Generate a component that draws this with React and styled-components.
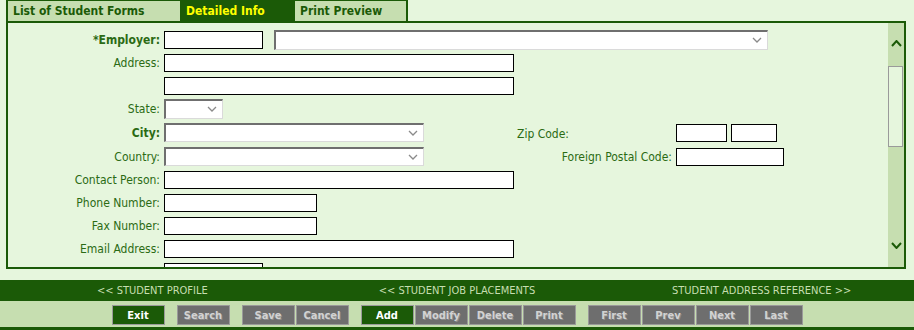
import React from 'react';
import styled, { createGlobalStyle } from 'styled-components';

const DARK = '#1b5a07';
const LIGHT = '#c6deb0';
const BG = '#e6f6dd';
const LABEL = '#2b6b14';
const FONT = '"DejaVu Sans Condensed", "DejaVu Sans", Verdana, sans-serif';

const Global = createGlobalStyle`
  html, body { margin: 0; padding: 0; background: ${BG}; }
  body { font-family: ${FONT}; font-stretch: condensed; overflow: hidden; }
  * { box-sizing: border-box; }
`;

const Page = styled.div`
  width: 914px;
  height: 330px;
  display: flex;
  flex-direction: column;
  background: ${BG};
`;

const TabBar = styled.div`
  display: flex;
  height: 21px;
  padding-left: 6px;
`;

const Tab = styled.div`
  width: ${p => p.$w}px;
  height: 21px;
  display: flex;
  align-items: center;
  padding-left: 5px;
  background: ${p => (p.$active ? DARK : LIGHT)};
  color: ${p => (p.$active ? '#ffff00' : DARK)};
  border-top: 1px solid ${DARK};
  border-left: ${p => (p.$first ? 2 : 1)}px solid ${DARK};
  border-right: ${p => (p.$last ? 2 : 0)}px solid ${DARK};
  font-weight: bold;
  font-size: 12px;
  white-space: nowrap;
`;

const Panel = styled.div`
  margin: 0 8px 0 6px;
  height: 248px;
  border: 2px solid ${DARK};
  display: flex;
  background: ${BG};
`;

const Content = styled.div`
  flex: 1;
  overflow: hidden;
  padding-top: 5px;
`;

const Row = styled.div`
  display: flex;
  align-items: center;
  height: ${p => p.$h || 23}px;
`;

const Label = styled.div`
  width: 152px;
  margin-right: 4px;
  text-align: right;
  color: ${LABEL};
  font-size: 12px;
  font-weight: ${p => (p.$bold ? 'bold' : 'normal')};
  white-space: nowrap;
`;

const TextBox = styled.div`
  width: ${p => p.$w}px;
  height: 18px;
  background: #fff;
  border: 1px solid #000;
  margin-left: ${p => p.$ml || 0}px;
`;

const SelectBox = styled.div`
  width: ${p => p.$w}px;
  height: ${p => p.$h || 19}px;
  margin-left: ${p => p.$ml || 0}px;
  background: #fff;
  border-style: solid;
  border-width: 2px 1px 1px 2px;
  border-color: #6f6f6f #dadada #dadada #6f6f6f;
  display: flex;
  align-items: center;
  justify-content: flex-end;
  padding-right: 5px;
`;

const Side = styled.div`
  display: flex;
  align-items: center;
  margin-left: 93px;
`;

const SideLabel = styled.div`
  width: 155px;
  margin-right: 4px;
  text-align: ${p => p.$align};
  color: ${LABEL};
  font-size: 12px;
  white-space: nowrap;
  padding-top: ${p => p.$pt || 0}px;
`;

const ScrollBar = styled.div`
  width: 16px;
  background: ${LIGHT};
  display: flex;
  flex-direction: column;
`;

const ArrowZone = styled.div`
  height: 43px;
  display: flex;
  justify-content: center;
  align-items: ${p => (p.$down ? 'flex-end' : 'flex-start')};
  padding: ${p => (p.$down ? '0 0 18px' : '17px 0 0')};
`;

const Thumb = styled.div`
  height: 81px;
  margin: 0 1px 0 0;
  background: ${BG};
  border: 1px solid #9a9a9a;
`;

const Track = styled.div`
  flex: 1;
`;

const Gap = styled.div`
  height: 11px;
`;

const NavBar = styled.div`
  height: 21px;
  background: ${DARK};
  display: grid;
  grid-template-columns: 1fr 1fr 1fr;
  align-items: center;
`;

const NavLink = styled.div`
  text-align: center;
  color: ${LIGHT};
  font-size: 11px;
  white-space: nowrap;
`;

const ButtonBar = styled.div`
  height: 29px;
  background: ${LIGHT};
  border-bottom: 3px solid ${DARK};
  display: flex;
  justify-content: center;
  align-items: flex-start;
  padding-top: 4px;
  gap: 12px;
`;

const Group = styled.div`
  display: flex;
  gap: 1px;
`;

const Button = styled.div`
  width: 53px;
  height: 20px;
  display: flex;
  align-items: center;
  justify-content: center;
  border: 1px solid #9a9a9a;
  background: ${p => (p.$enabled ? DARK : '#6e6e6e')};
  color: ${p => (p.$enabled ? '#ffffff' : '#d2d2d2')};
  text-shadow: ${p => (p.$enabled ? 'none' : '1px 1px 0 #8c8c8c')};
  font-weight: bold;
  font-size: 11px;
`;

const Chevron = ({ down, color = DARK, w = 11, h = 7, sw = 2 }) => (
  <svg width={w} height={h} viewBox={`0 0 ${w} ${h}`}>
    <polyline
      points={down ? `1,1 ${w / 2},${h - 1} ${w - 1},1` : `1,${h - 1} ${w / 2},1 ${w - 1},${h - 1}`}
      fill="none"
      stroke={color}
      strokeWidth={sw}
    />
  </svg>
);

const SelArrow = () => <Chevron down color="#8a8a8a" w={10} h={6} sw={1.3} />;

const groups = [
  [['Exit', true]],
  [['Search', false]],
  [['Save', false], ['Cancel', false]],
  [['Add', true], ['Modify', false], ['Delete', false], ['Print', false]],
  [['First', false], ['Prev', false], ['Next', false], ['Last', false]],
];

export default function App() {
  return (
    <Page>
      <Global />
      <TabBar>
        <Tab $w={174} $first>List of Student Forms</Tab>
        <Tab $w={114} $active>Detailed Info</Tab>
        <Tab $w={114} $last>Print Preview</Tab>
      </TabBar>
      <Panel>
        <Content>
          <Row>
            <Label $bold>*Employer:</Label>
            <TextBox $w={99} />
            <SelectBox $w={494} $h={20} $ml={11}><SelArrow /></SelectBox>
          </Row>
          <Row>
            <Label>Address:</Label>
            <TextBox $w={350} />
          </Row>
          <Row>
            <Label />
            <TextBox $w={350} />
          </Row>
          <Row>
            <Label>State:</Label>
            <SelectBox $w={59} $h={20}><SelArrow /></SelectBox>
          </Row>
          <Row $h={25}>
            <Label $bold>City:</Label>
            <SelectBox $w={260}><SelArrow /></SelectBox>
            <Side>
              <SideLabel $align="left" $pt={3}>Zip Code:</SideLabel>
              <TextBox $w={51} />
              <TextBox $w={46} $ml={4} />
            </Side>
          </Row>
          <Row>
            <Label>Country:</Label>
            <SelectBox $w={260}><SelArrow /></SelectBox>
            <Side>
              <SideLabel $align="right">Foreign Postal Code:</SideLabel>
              <TextBox $w={108} />
            </Side>
          </Row>
          <Row>
            <Label>Contact Person:</Label>
            <TextBox $w={350} />
          </Row>
          <Row>
            <Label>Phone Number:</Label>
            <TextBox $w={153} />
          </Row>
          <Row>
            <Label>Fax Number:</Label>
            <TextBox $w={153} />
          </Row>
          <Row>
            <Label>Email Address:</Label>
            <TextBox $w={350} />
          </Row>
          <Row>
            <Label />
            <TextBox $w={99} />
          </Row>
        </Content>
        <ScrollBar>
          <ArrowZone><Chevron /></ArrowZone>
          <Thumb />
          <Track />
          <ArrowZone $down><Chevron down /></ArrowZone>
        </ScrollBar>
      </Panel>
      <Gap />
      <NavBar>
        <NavLink>&lt;&lt; STUDENT PROFILE</NavLink>
        <NavLink>&lt;&lt; STUDENT JOB PLACEMENTS</NavLink>
        <NavLink>STUDENT ADDRESS REFERENCE &gt;&gt;</NavLink>
      </NavBar>
      <ButtonBar>
        {groups.map((g, i) => (
          <Group key={i}>
            {g.map(([t, en]) => (
              <Button key={t} $enabled={en}>{t}</Button>
            ))}
          </Group>
        ))}
      </ButtonBar>
    </Page>
  );
}
